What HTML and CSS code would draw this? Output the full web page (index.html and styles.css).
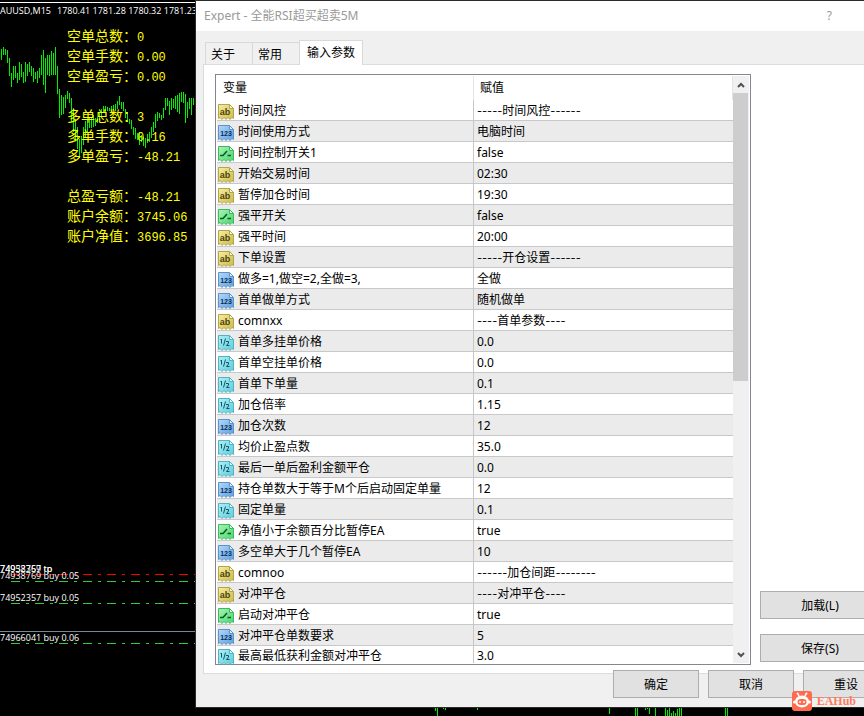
FILE: index.html
```html
<!DOCTYPE html>
<html lang="zh-CN">
<head>
    <meta charset="UTF-8">
    <meta name="viewport" content="width=device-width, initial-scale=1.0">
    <title>Expert - 全能RSI超买超卖5M</title>
    <link rel="stylesheet" href="styles.css">
</head>
<body>

    <!-- Icon set for the parameter types -->
    <svg width="0" height="0" class="icon-defs" aria-hidden="true">
        <defs>
            <linearGradient id="g-str" x1="0" y1="0" x2="1" y2="1"><stop offset="0" stop-color="#f5efa0"/><stop offset="1" stop-color="#cdb84a"/></linearGradient>
            <linearGradient id="g-int" x1="0" y1="0" x2="1" y2="1"><stop offset="0" stop-color="#b4d8fb"/><stop offset="1" stop-color="#5c9fdd"/></linearGradient>
            <linearGradient id="g-bool" x1="0" y1="0" x2="1" y2="1"><stop offset="0" stop-color="#a5f5b0"/><stop offset="1" stop-color="#4cd472"/></linearGradient>
            <linearGradient id="g-dbl" x1="0" y1="0" x2="1" y2="1"><stop offset="0" stop-color="#b0eff5"/><stop offset="1" stop-color="#5fcbdb"/></linearGradient>
        </defs>
        <symbol id="str" viewBox="0 0 16 16">
            <path d="M.5.5h11l4 4v10l-1.500-1-2 2-2-2-2 2-2-2-2 2-2-2-1.500 1z" fill="url(#g-str)" stroke="#b3a548"/>
            <path d="M11.500.5v4h4z" fill="#fbf8d4" stroke="#b3a548"/>
            <text x="7" y="11" text-anchor="middle" class="glyph glyph-ab" fill="#4c440c">ab</text>
        </symbol>
        <symbol id="int" viewBox="0 0 16 16">
            <path d="M.5.5h11l4 4v10l-1.500-1-2 2-2-2-2 2-2-2-2 2-2-2-1.500 1z" fill="url(#g-int)" stroke="#5d93c9"/>
            <path d="M11.500.5v4h4z" fill="#e2f1ff" stroke="#5d93c9"/>
            <text x="8" y="11" text-anchor="middle" class="glyph glyph-num" fill="#062c58">123</text>
        </symbol>
        <symbol id="bool" viewBox="0 0 16 16">
            <path d="M.5.5h11l4 4v10l-1.500-1-2 2-2-2-2 2-2-2-2 2-2-2-1.500 1z" fill="url(#g-bool)" stroke="#3fb862"/>
            <path d="M11.500.5v4h4z" fill="#dcffe2" stroke="#3fb862"/>
            <path d="M2 9.500h3L9 5M9.500 9.500H13" fill="none" stroke="#0b5a22" stroke-width="1.500"/>
        </symbol>
        <symbol id="dbl" viewBox="0 0 16 16">
            <path d="M.5.5h11l4 4v10l-1.500-1-2 2-2-2-2 2-2-2-2 2-2-2-1.500 1z" fill="url(#g-dbl)" stroke="#4fb5c5"/>
            <path d="M11.500.5v4h4z" fill="#e0fbff" stroke="#4fb5c5"/>
            <path d="M3.500 4v4.500M2.500 4.500h1M7.500 3.500l-2 7M8 6.500h2.500v1.500l-2 2.500h3" fill="none" stroke="#0d5a66"/>
        </symbol>
    </svg>

    <main class="terminal">

        <svg class="chart" width="100%" height="716" aria-hidden="true">
            <path class="frame" d="M0 2.500h196"/>
            <path class="bars" d="M1.500 49V60M3.500 47V55M5.500 49V55M7.500 50V63M9.500 58V76M11.500 73V87M13.500 66V80M15.500 66V78M17.500 73V83M19.500 62V80M21.500 64V77M23.500 72V83M25.500 62V82M27.500 64V76M29.500 62V72M31.500 66V76M33.500 68V82M35.500 72V79M37.500 71V83M39.500 68V78M41.500 55V75M43.500 50V85M45.500 58V93M47.500 55V75M49.500 55V76M51.500 51V75M53.500 53V75M55.500 47V75M57.500 66V94M59.500 89V118M61.500 95V115M63.500 97V114M65.500 95V108M67.500 91V99M69.500 93V103M71.500 98V121M73.500 108V132M75.500 121V140M77.500 127V149M79.500 139V158M81.500 136V153M83.500 127V145M85.500 121V137M87.500 120V132M89.500 118V128M91.500 117V128M93.500 115V127M95.500 118V126M97.500 117V123M99.500 112V120M101.500 109V118M103.500 106V111M105.500 106V112M107.500 107V111M109.500 108V111M111.500 106V112M113.500 105V110M115.500 104V110M117.500 101V109M119.500 96V105M121.500 102V109M123.500 102V111M125.500 109V118M127.500 112V122M129.500 119V124M131.500 120V129M133.500 127V135M135.500 128V139M137.500 133V140M139.500 132V145M141.500 135V142M143.500 137V146M145.500 138V148M147.500 134V143M149.500 132V142M151.500 127V138M153.500 122V132M155.500 114V128M157.500 112V121M159.500 113V118M161.500 115V120M163.500 108V118M165.500 98V110M167.500 98V106M169.500 101V115M171.500 98V110M173.500 99V108M175.500 96V109M177.500 95V112M179.500 93V114M181.500 92V102M183.500 92V103M185.500 94V123M187.500 102V118M189.500 98V109M191.500 98V115M193.500 98V105"/>
            <path class="bars" d="M435.500 707V711M437.500 707V716M443.500 707V709M445.500 707V710M477.500 707V710M609.500 707V714M635.500 707V716M637.500 707V716M645.500 707V710M647.500 707V709M649.500 707V714M655.500 707V716M665.500 708V716M667.500 710V716M669.500 707V716M671.500 713V716M673.500 711V716M675.500 713V716M677.500 709V716M679.500 707V716M681.500 707V716M725.500 707V716M727.500 707V716"/>
            <path class="order-line tp" d="M11 574.500h185"/>
            <path class="order-line" d="M11 581.500h185"/>
            <path class="order-line" d="M11 603.500h185"/>
            <path class="price-line" d="M0 631.500h196"/>
            <path class="order-line" d="M11 643.500h185"/>
            <text x="0" y="14" class="quote">AUUSD,M15</text>
            <text x="57" y="14" class="quote">1780.41 1781.28 1780.32 1781.23</text>
            <text x="0" y="572" class="quote">74952357 tp</text>
            <text x="0" y="572" class="quote">74938769 tp</text>
            <text x="0" y="579" class="quote">74938769 buy 0.05</text>
            <text x="0" y="601" class="quote">74952357 buy 0.05</text>
            <text x="0" y="641" class="quote">74966041 buy 0.06</text>
        </svg>

        <div class="account">
            <p>空单总数：<span>0</span></p>
            <p>空单手数：<span>0.00</span></p>
            <p>空单盈亏：<span>0.00</span></p>
            <p class="group">多单总数：<span>3</span></p>
            <p>多单手数：<span>0.16</span></p>
            <p>多单盈亏：<span>-48.21</span></p>
            <p class="group">总盈亏额：<span>-48.21</span></p>
            <p>账户余额：<span>3745.06</span></p>
            <p>账户净值：<span>3696.85</span></p>
        </div>

        <section class="dialog">
            <header class="title-bar">
                <h1>Expert - 全能RSI超买超卖5M</h1>
                <button class="help" type="button" aria-label="帮助">?</button>
            </header>

            <nav class="tabs">
                <button type="button">关于</button>
                <button type="button">常用</button>
                <button type="button" class="active">输入参数</button>
            </nav>

            <div class="pane">
                <div class="list-box">
                    <table class="params">
                        <thead>
                            <tr><th>变量</th><th>赋值</th></tr>
                        </thead>
                        <tbody>
                            <tr><td><svg><use href="#str"/></svg>时间风控</td><td><i>-----</i>时间风控<i>------</i></td></tr>
                            <tr><td><svg><use href="#int"/></svg>时间使用方式</td><td>电脑时间</td></tr>
                            <tr><td><svg><use href="#bool"/></svg>时间控制开关1</td><td>false</td></tr>
                            <tr><td><svg><use href="#str"/></svg>开始交易时间</td><td>02:30</td></tr>
                            <tr><td><svg><use href="#str"/></svg>暂停加仓时间</td><td>19:30</td></tr>
                            <tr><td><svg><use href="#bool"/></svg>强平开关</td><td>false</td></tr>
                            <tr><td><svg><use href="#str"/></svg>强平时间</td><td>20:00</td></tr>
                            <tr><td><svg><use href="#str"/></svg>下单设置</td><td><i>-----</i>开仓设置<i>------</i></td></tr>
                            <tr><td><svg><use href="#int"/></svg>做多=1,做空=2,全做=3,</td><td>全做</td></tr>
                            <tr><td><svg><use href="#int"/></svg>首单做单方式</td><td>随机做单</td></tr>
                            <tr><td><svg><use href="#str"/></svg>comnxx</td><td><i>----</i>首单参数<i>----</i></td></tr>
                            <tr><td><svg><use href="#dbl"/></svg>首单多挂单价格</td><td>0.0</td></tr>
                            <tr><td><svg><use href="#dbl"/></svg>首单空挂单价格</td><td>0.0</td></tr>
                            <tr><td><svg><use href="#dbl"/></svg>首单下单量</td><td>0.1</td></tr>
                            <tr><td><svg><use href="#dbl"/></svg>加仓倍率</td><td>1.15</td></tr>
                            <tr><td><svg><use href="#int"/></svg>加仓次数</td><td>12</td></tr>
                            <tr><td><svg><use href="#dbl"/></svg>均价止盈点数</td><td>35.0</td></tr>
                            <tr><td><svg><use href="#dbl"/></svg>最后一单后盈利金额平仓</td><td>0.0</td></tr>
                            <tr><td><svg><use href="#int"/></svg>持仓单数大于等于M个后启动固定单量</td><td>12</td></tr>
                            <tr><td><svg><use href="#dbl"/></svg>固定单量</td><td>0.1</td></tr>
                            <tr><td><svg><use href="#bool"/></svg>净值小于余额百分比暂停EA</td><td>true</td></tr>
                            <tr><td><svg><use href="#int"/></svg>多空单大于几个暂停EA</td><td>10</td></tr>
                            <tr><td><svg><use href="#str"/></svg>comnoo</td><td><i>------</i>加仓间距<i>--------</i></td></tr>
                            <tr><td><svg><use href="#str"/></svg>对冲平仓</td><td><i>----</i>对冲平仓<i>----</i></td></tr>
                            <tr><td><svg><use href="#bool"/></svg>启动对冲平仓</td><td>true</td></tr>
                            <tr><td><svg><use href="#int"/></svg>对冲平仓单数要求</td><td>5</td></tr>
                            <tr><td><svg><use href="#dbl"/></svg>最高最低获利金额对冲平仓</td><td>3.0</td></tr>
                        </tbody>
                    </table>
                    <div class="scrollbar">
                        <button type="button" aria-label="向上滚动"><svg viewBox="0 0 8 6"><path d="M1 5l3-3 3 3"/></svg></button>
                        <div class="track"><div class="thumb"></div></div>
                        <button type="button" aria-label="向下滚动"><svg viewBox="0 0 8 6"><path d="M1 1l3 3 3-3"/></svg></button>
                    </div>
                </div>
                <div class="side">
                    <button type="button" class="btn">加载(L)</button>
                    <button type="button" class="btn">保存(S)</button>
                </div>
            </div>

            <footer class="actions">
                <button type="button" class="btn">确定</button>
                <button type="button" class="btn">取消</button>
                <button type="button" class="btn">重设</button>
            </footer>
        </section>

        <div class="watermark">
            <svg viewBox="0 0 20 20" aria-hidden="true">
                <rect width="20" height="20" rx="3" fill="#ff6b4d"/>
                <path d="M7 5L6 3M13 5l1-2" stroke="#fff" stroke-width="1.500" stroke-linecap="round"/>
                <circle cx="5.500" cy="2.500" r="1" fill="#fff"/>
                <circle cx="14.500" cy="2.500" r="1" fill="#fff"/>
                <ellipse cx="10" cy="10.500" rx="7" ry="6" fill="#fff"/>
                <circle cx="2.500" cy="11" r="1.500" fill="#fff"/>
                <circle cx="17.500" cy="11" r="1.500" fill="#fff"/>
                <rect x="5.500" y="8" width="9" height="6" rx="3" fill="#ff6b4d"/>
                <circle cx="8" cy="11" r="1" fill="#fff"/>
                <circle cx="12" cy="11" r="1" fill="#fff"/>
            </svg>
            <span>EAHub</span>
        </div>

    </main>

</body>
</html>
```
FILE: styles.css
```css
* {
    box-sizing: border-box;
}

body {
    margin: 0;
    background-color: #000;
    color: #000;
    font-family: "Noto Sans", "Noto Sans CJK SC", sans-serif;
    font-size: 12px;
}

button {
    font: inherit;
    color: inherit;
}

.icon-defs {
    position: absolute;
}

.terminal {
    position: relative;
    min-height: 100vh;
    overflow: hidden;
}

/* Chart behind the dialog */
.chart {
    position: absolute;
    top: 0;
    left: 0;
}

.chart path {
    fill: none;
    shape-rendering: crispEdges;
}

.frame {
    stroke: #fff;
}

.bars {
    stroke: #00f000;
}

.order-line {
    stroke: #32cd32;
    stroke-dasharray: 9 6 3 6;
}

.order-line.tp {
    stroke: #f00;
}

.price-line {
    stroke: #778899;
}

.quote {
    fill: #fff;
    font-family: "Open Sans", sans-serif;
    font-size: 9px;
}

.account {
    position: absolute;
    top: 25px;
    left: 67px;
    color: #ff0;
    font-family: "Noto Sans CJK SC", sans-serif;
    font-size: 14px;
    line-height: 20px;
    white-space: nowrap;
}

.account p {
    height: 20px;
    margin: 0;
}

.account .group {
    margin-top: 20px;
}

.account span {
    font-family: "Liberation Mono", monospace;
    font-size: 12px;
    line-height: 12px;
}

/* Dialog window */
.dialog {
    position: absolute;
    top: 0;
    left: 195px;
    right: -33px;
    background-color: #f0f0f0;
    border: 1px solid #2b2b2b;
}

.title-bar {
    display: flex;
    justify-content: space-between;
    align-items: center;
    height: 30px;
    padding: 0 60px 2px 8px;
    background-color: #fff;
    color: #999;
}

.title-bar h1 {
    margin: 0;
    font-size: 12px;
    font-weight: normal;
}

.help {
    padding: 0 4px;
    border: none;
    background: none;
}

.tabs {
    display: flex;
    align-items: flex-end;
    height: 33px;
    padding-left: 9px;
}

.tabs button {
    height: 22px;
    width: 48px;
    padding: 0 12px 0 0;
    margin-right: -1px;
    border: 1px solid #d9d9d9;
    border-bottom: none;
    background-color: #f0f0f0;
}

.tabs .active {
    position: relative;
    width: 64px;
    height: 25px;
    padding: 0 0 2px;
    margin-bottom: -1px;
    background-color: #fff;
}

.pane {
    display: flex;
    gap: 9px;
    margin: 0 7px;
    padding: 9px 8px 8px 11px;
    border: 1px solid #dcdcdc;
    background-color: #fff;
}

.list-box {
    flex: 1;
    display: flex;
    padding: 1px;
    border: 1px solid #828790;
}

.params {
    flex: 1;
    table-layout: fixed;
    border-collapse: separate;
    border-spacing: 0;
    line-height: 18px;
    white-space: nowrap;
}

.params th {
    height: 24px;
    padding: 0 6px;
    border-right: 1px solid #e5e5e5;
    font-weight: normal;
    text-align: left;
}

.params td {
    height: 21px;
    padding: 2px 3px 0;
    border-bottom: 1px solid #c8c8c8;
}

.params th:first-child,
.params td:first-child {
    width: 257px;
}

.params td:first-child {
    padding: 2px 1px 0;
    border-right: 1px solid #c8c8c8;
}

.params tbody tr:nth-child(even) {
    background-color: #ebebeb;
}

.params tbody tr:last-child td {
    height: 17px;
    padding-top: 3px;
    border-bottom: none;
    line-height: 14px;
}

.params svg {
    width: 16px;
    height: 16px;
    margin: -3px 4px -3px 0;
    vertical-align: middle;
}

/* Wider dashes in the section captions */
.params i {
    font-family: Inter, sans-serif;
    font-size: 11px;
    font-style: normal;
    line-height: 12px;
}

.glyph {
    font-family: "Liberation Sans", sans-serif;
    font-weight: bold;
}

.glyph-ab {
    font-size: 9px;
}

.glyph-num {
    font-size: 7px;
}

.scrollbar {
    display: flex;
    flex-direction: column;
    width: 16px;
    background-color: #f0f0f0;
}

.scrollbar button {
    height: 17px;
    padding: 0;
    border: none;
    background: none;
    line-height: 0;
}

.scrollbar svg {
    width: 8px;
    height: 6px;
    fill: none;
    stroke: #505050;
    stroke-width: 2;
}

.track {
    flex: 1;
}

.thumb {
    width: 15px;
    height: 52%;
    background-color: #cdcdcd;
}

.side {
    display: flex;
    flex-direction: column;
    justify-content: flex-end;
    gap: 15px;
    width: 120px;
    padding-bottom: 3px;
}

.btn {
    height: 28px;
    border: 1px solid #adadad;
    background-color: #e1e1e1;
}

.btn:hover {
    border-color: #0078d7;
    background-color: #e5f1fb;
}

.actions {
    position: relative;
    display: flex;
    justify-content: flex-end;
    gap: 9px;
    margin-top: -4px;
    padding: 0 7px 9px;
}

.actions .btn {
    width: 86px;
}

.watermark {
    position: absolute;
    right: 8px;
    bottom: 5px;
    display: flex;
    align-items: center;
    gap: 5px;
    color: #ff7a5c;
    font-family: "Liberation Serif", serif;
    font-size: 12px;
    font-weight: bold;
}

.watermark svg {
    width: 20px;
    height: 20px;
}
```
